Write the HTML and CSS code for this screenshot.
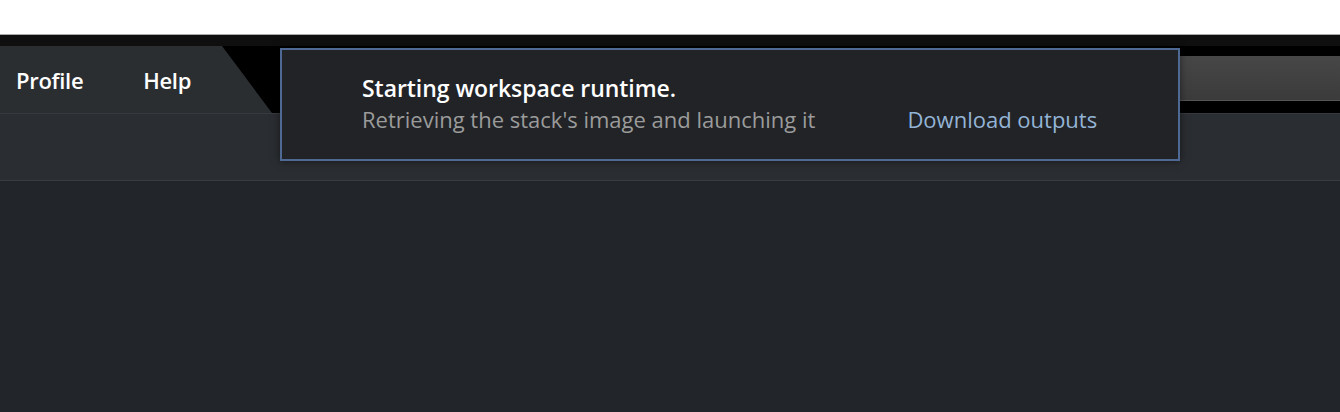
FILE: index.html
```html
<!DOCTYPE html>
<html>
<head>
<meta charset="utf-8">
<link rel="stylesheet" href="styles.css">
</head>
<body>
<div class="page">
  <div class="browser-top"></div>
  <div class="topstrip"></div>
  <div class="navrow">
    <div class="tab">
      <span class="tab-item">Profile</span>
      <span class="tab-item">Help</span>
    </div>
    <div class="nav-fill">
      <div class="searchbar"></div>
    </div>
  </div>
  <div class="toolbar"></div>
  <div class="content"></div>
  <div class="notice">
    <div class="notice-text">
      <div class="notice-title">Starting workspace runtime.</div>
      <div class="notice-sub">Retrieving the stack's image and launching it</div>
    </div>
    <a class="notice-link">Download outputs</a>
  </div>
</div>
</body>
</html>
```

FILE: styles.css
```css
html, body {
  margin: 0;
  padding: 0;
  background: #222529;
  font-family: "Open Sans", "Noto Sans", sans-serif;
}
.page {
  position: relative;
  width: 1340px;
  height: 412px;
  display: flex;
  flex-direction: column;
  overflow: hidden;
}
.browser-top {
  height: 34px;
  background: #ffffff;
  border-bottom: 1px solid #a9a9a9;
  flex: none;
}
.topstrip {
  height: 11px;
  background: #0f0f0f;
  flex: none;
}
.navrow {
  height: 67px;
  background: #000;
  display: flex;
  flex: none;
}
.tab {
  width: 272px;
  height: 67px;
  background: #2b2e31;
  clip-path: polygon(0 0, 222px 0, 272px 67px, 0 67px);
  display: flex;
  align-items: center;
  padding-left: 16px;
  box-sizing: border-box;
  gap: 60px;
  flex: none;
}
.tab-item {
  color: #ffffff;
  font-size: 22px;
  font-weight: 600;
  letter-spacing: -0.3px;
}
.nav-fill {
  flex: 1;
  display: flex;
  justify-content: flex-end;
  padding-top: 10px;
}
.searchbar {
  width: 440px;
  height: 44px;
  background: linear-gradient(#474747, #3b3b3b);
  border-bottom: 1px solid #565656;
}
.toolbar {
  height: 66px;
  background: #2a2d31;
  border-top: 1px solid #363a3e;
  border-bottom: 1px solid #383b3f;
  flex: none;
}
.content {
  flex: 1;
  background: #222529;
}
.notice {
  position: absolute;
  left: 280px;
  top: 48px;
  width: 900px;
  height: 113px;
  box-sizing: border-box;
  background: #212326;
  border: 2px solid #4e6993;
  box-shadow: 0 0 8px rgba(0, 0, 0, 0.5);
  display: flex;
  align-items: flex-end;
  padding: 0 0 26px 80px;
}
.notice-text {
  display: flex;
  flex-direction: column;
  gap: 2px;
}
.notice-title {
  color: #ffffff;
  font-size: 23px;
  font-weight: 600;
  letter-spacing: -0.05px;
  line-height: 29px;
}
.notice-sub {
  color: #9b9b9b;
  font-size: 22px;
  line-height: 28px;
}
.notice-link {
  color: #94b4d6;
  font-size: 22px;
  line-height: 28px;
  margin-left: 92px;
}
```
